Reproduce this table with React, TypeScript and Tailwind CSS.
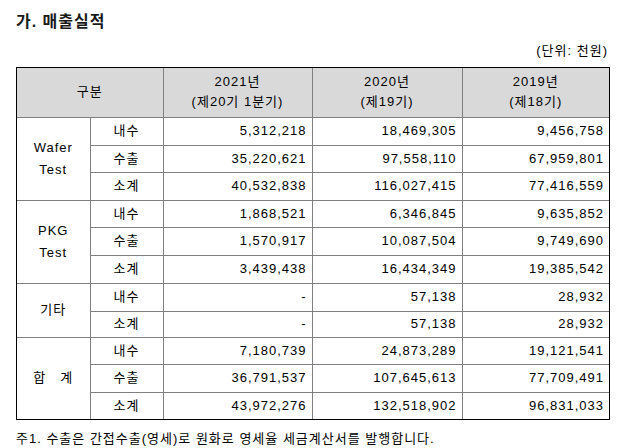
const rows: { group?: { label: string; span: number; pre?: boolean }; kind: string; v: [string, string, string]; h: number }[] = [
  { group: { label: 'Wafer\nTest', span: 3 }, kind: '내수', v: ['5,312,218', '18,469,305', '9,456,758'], h: 28 },
  { kind: '수출', v: ['35,220,621', '97,558,110', '67,959,801'], h: 27 },
  { kind: '소계', v: ['40,532,838', '116,027,415', '77,416,559'], h: 28 },
  { group: { label: 'PKG\nTest', span: 3 }, kind: '내수', v: ['1,868,521', '6,346,845', '9,635,852'], h: 27 },
  { kind: '수출', v: ['1,570,917', '10,087,504', '9,749,690'], h: 28 },
  { kind: '소계', v: ['3,439,438', '16,434,349', '19,385,542'], h: 28 },
  { group: { label: '기타', span: 2 }, kind: '내수', v: ['-', '57,138', '28,932'], h: 28 },
  { kind: '소계', v: ['-', '57,138', '28,932'], h: 26 },
  { group: { label: '합   계', span: 3, pre: true }, kind: '내수', v: ['7,180,739', '24,873,289', '19,121,541'], h: 27 },
  { kind: '수출', v: ['36,791,537', '107,645,613', '77,709,491'], h: 28 },
  { kind: '소계', v: ['43,972,276', '132,518,902', '96,831,033'], h: 27 },
]

const font = { fontFamily: '"Liberation Sans", "Noto Sans CJK KR", sans-serif' }

export default function App() {
  return (
    <div className="h-[448px] w-[630px] bg-white pl-4 tracking-[1px] text-black" style={font}>
      <h2 className="pt-[11px] text-[16px] font-bold leading-[22px] text-[#1a1a1a]">가. 매출실적</h2>
      <p className="mt-[9px] w-[592px] text-right text-[13px] leading-[18px]">(단위: 천원)</p>

      <div className="mt-[7px] w-[594px] border border-black">
        <table className="w-full table-fixed border-collapse border-hidden text-[13px]">
          <colgroup>
            <col className="w-[73px]" />
            <col className="w-[73px]" />
            <col className="w-[149px]" />
            <col className="w-[150px]" />
            <col />
          </colgroup>
          <thead>
            <tr className="h-[49px] bg-[#d9d9d9] leading-[20px]">
              <th colSpan={2} className="border border-[#808080] font-normal">구분</th>
              <th className="border border-[#808080] font-normal">
                2021년
                <br />
                (제20기 1분기)
              </th>
              <th className="border border-[#808080] font-normal">
                2020년
                <br />
                (제19기)
              </th>
              <th className="border border-[#808080] font-normal">
                2019년
                <br />
                (제18기)
              </th>
            </tr>
          </thead>
          <tbody>
            {rows.map((r, i) => (
              <tr key={i} style={{ height: r.h }}>
                {r.group && (
                  <td
                    rowSpan={r.group.span}
                    className="whitespace-pre-line border border-[#808080] text-center leading-[22px]"
                    style={r.group.pre ? { whiteSpace: 'pre' } : undefined}
                  >
                    {r.group.label}
                  </td>
                )}
                <td className="border border-[#808080] text-center">{r.kind}</td>
                {r.v.map((n, j) => (
                  <td key={j} className="border border-[#808080] pr-[5px] text-right">
                    {n}
                  </td>
                ))}
              </tr>
            ))}
          </tbody>
        </table>
      </div>

      <p className="mt-[10px] text-[13px] leading-[18px]">
        주1. 수출은 간접수출(영세)로 원화로 영세율 세금계산서를 발행합니다.
      </p>
    </div>
  )
}
